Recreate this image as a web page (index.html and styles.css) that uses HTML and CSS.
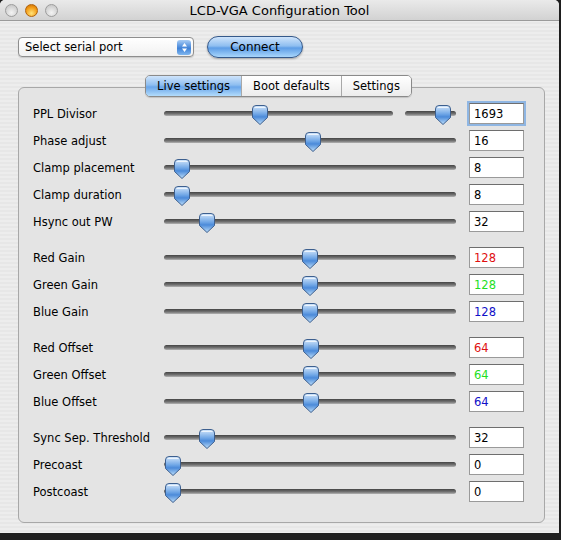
FILE: index.html
```html
<!DOCTYPE html>
<html lang="en">
<head>
    <meta charset="UTF-8">
    <title>LCD-VGA Configuration Tool</title>
    <link rel="stylesheet" href="styles.css">
</head>
<body>

<div class="window">
    <!-- Barra del titolo -->
    <div class="titlebar">
        <div class="lights">
            <span class="light"></span>
            <span class="light orange"></span>
            <span class="light"></span>
        </div>
        <div class="title">LCD-VGA Configuration Tool</div>
    </div>

    <!-- Porta seriale -->
    <div class="toolbar">
        <div class="select">
            <span>Select serial port</span>
            <span class="arrows">
                <svg width="7" height="11" viewBox="0 0 7 11"><path d="M3.5 1 L6 4.5 H1 Z M3.5 10 L6 6.5 H1 Z" fill="#fff"/></svg>
            </span>
        </div>
        <button class="connect">Connect</button>
    </div>

    <!-- Pannello con le schede -->
    <div class="panel">
        <div class="tabs">
            <div class="tab active">Live settings</div>
            <div class="tab">Boot defaults</div>
            <div class="tab">Settings</div>
        </div>

        <div class="group">
            <div class="row">
                <div class="label">PPL Divisor</div>
                <div class="sliders">
                    <div class="slider wide"><div class="track"></div><div class="thumb" style="left: 42%"><svg width="18" height="22" viewBox="0 0 18 22"><use href="#thumb"/></svg></div></div>
                    <div class="slider small"><div class="track"></div><div class="thumb" style="left: 75%"><svg width="18" height="22" viewBox="0 0 18 22"><use href="#thumb"/></svg></div></div>
                </div>
                <input class="value focus" value="1693">
            </div>
            <div class="row">
                <div class="label">Phase adjust</div>
                <div class="slider"><div class="track"></div><div class="thumb" style="left: 51%"><svg width="18" height="22" viewBox="0 0 18 22"><use href="#thumb"/></svg></div></div>
                <input class="value" value="16">
            </div>
            <div class="row">
                <div class="label">Clamp placement</div>
                <div class="slider"><div class="track"></div><div class="thumb" style="left: 6.2%"><svg width="18" height="22" viewBox="0 0 18 22"><use href="#thumb"/></svg></div></div>
                <input class="value" value="8">
            </div>
            <div class="row">
                <div class="label">Clamp duration</div>
                <div class="slider"><div class="track"></div><div class="thumb" style="left: 6.2%"><svg width="18" height="22" viewBox="0 0 18 22"><use href="#thumb"/></svg></div></div>
                <input class="value" value="8">
            </div>
            <div class="row">
                <div class="label">Hsync out PW</div>
                <div class="slider"><div class="track"></div><div class="thumb" style="left: 14.7%"><svg width="18" height="22" viewBox="0 0 18 22"><use href="#thumb"/></svg></div></div>
                <input class="value" value="32">
            </div>
        </div>

        <div class="group">
            <div class="row">
                <div class="label">Red Gain</div>
                <div class="slider"><div class="track"></div><div class="thumb" style="left: 50%"><svg width="18" height="22" viewBox="0 0 18 22"><use href="#thumb"/></svg></div></div>
                <input class="value red" value="128">
            </div>
            <div class="row">
                <div class="label">Green Gain</div>
                <div class="slider"><div class="track"></div><div class="thumb" style="left: 50%"><svg width="18" height="22" viewBox="0 0 18 22"><use href="#thumb"/></svg></div></div>
                <input class="value green" value="128">
            </div>
            <div class="row">
                <div class="label">Blue Gain</div>
                <div class="slider"><div class="track"></div><div class="thumb" style="left: 50%"><svg width="18" height="22" viewBox="0 0 18 22"><use href="#thumb"/></svg></div></div>
                <input class="value blue" value="128">
            </div>
        </div>

        <div class="group">
            <div class="row">
                <div class="label">Red Offset</div>
                <div class="slider"><div class="track"></div><div class="thumb" style="left: 50.3%"><svg width="18" height="22" viewBox="0 0 18 22"><use href="#thumb"/></svg></div></div>
                <input class="value red" value="64">
            </div>
            <div class="row">
                <div class="label">Green Offset</div>
                <div class="slider"><div class="track"></div><div class="thumb" style="left: 50.3%"><svg width="18" height="22" viewBox="0 0 18 22"><use href="#thumb"/></svg></div></div>
                <input class="value green" value="64">
            </div>
            <div class="row">
                <div class="label">Blue Offset</div>
                <div class="slider"><div class="track"></div><div class="thumb" style="left: 50.3%"><svg width="18" height="22" viewBox="0 0 18 22"><use href="#thumb"/></svg></div></div>
                <input class="value blue" value="64">
            </div>
        </div>

        <div class="group">
            <div class="row">
                <div class="label">Sync Sep. Threshold</div>
                <div class="slider"><div class="track"></div><div class="thumb" style="left: 14.7%"><svg width="18" height="22" viewBox="0 0 18 22"><use href="#thumb"/></svg></div></div>
                <input class="value" value="32">
            </div>
            <div class="row">
                <div class="label">Precoast</div>
                <div class="slider"><div class="track"></div><div class="thumb" style="left: 3.1%"><svg width="18" height="22" viewBox="0 0 18 22"><use href="#thumb"/></svg></div></div>
                <input class="value" value="0">
            </div>
            <div class="row">
                <div class="label">Postcoast</div>
                <div class="slider"><div class="track"></div><div class="thumb" style="left: 3.1%"><svg width="18" height="22" viewBox="0 0 18 22"><use href="#thumb"/></svg></div></div>
                <input class="value" value="0">
            </div>
        </div>
    </div>
</div>

<!-- Forma del cursore (aqua) -->
<svg class="defs" width="0" height="0">
    <defs>
        <linearGradient id="aqua" x1="0" y1="0" x2="0" y2="1">
            <stop offset="0" stop-color="#d6e8fb"/>
            <stop offset="0.45" stop-color="#6fa6e6"/>
            <stop offset="0.6" stop-color="#4b8ad9"/>
            <stop offset="1" stop-color="#bfe0fb"/>
        </linearGradient>
        <g id="thumb">
            <path d="M1.5 5 Q1.5 1.5 5 1.5 H13 Q16.5 1.5 16.5 5 V13.5 L9 20.5 L1.5 13.5 Z" fill="url(#aqua)" stroke="#3d5f8e" stroke-width="1"/>
            <path d="M3.5 3.5 H14.5" stroke="#fff" stroke-opacity="0.7" stroke-width="1"/>
        </g>
    </defs>
</svg>

</body>
</html>
```

FILE: styles.css
```css
    body {
        margin: 0;
        background-color: #1e1e1e;
        font-family: "DejaVu Sans", sans-serif;
        font-size: 11.5px;
        color: #000;
    }
    .window {
        width: 559px;
        height: 533px;
        border-radius: 5px 5px 0 0;
        background: repeating-linear-gradient(#ededed 0, #ededed 2px, #e7e7e7 2px, #e7e7e7 4px);
        overflow: hidden;
    }
    .titlebar {
        height: 20px;
        display: flex;
        align-items: center;
        position: relative;
        background: linear-gradient(#eaeaea, #d2d2d2);
        border-bottom: 1px solid #9a9a9a;
    }
    .lights {
        display: flex;
        gap: 7px;
        padding-left: 5px;
    }
    .light {
        width: 13px;
        height: 13px;
        border-radius: 50%;
        border: 1px solid #9c9c9c;
        box-sizing: border-box;
        background: radial-gradient(circle at 50% 70%, #f4f4f4, #c9c9c9 80%);
    }
    .light.orange {
        border-color: #b0620a;
        background: radial-gradient(circle at 50% 75%, #ffe37a, #f29a15 60%, #c46a08);
    }
    .title {
        position: absolute;
        left: 0;
        right: 0;
        text-align: center;
        font-size: 13px;
        pointer-events: none;
    }
    .toolbar {
        display: flex;
        align-items: center;
        gap: 13px;
        padding: 15px 0 0 18px;
        height: 22px;
    }
    .select {
        width: 176px;
        height: 20px;
        box-sizing: border-box;
        border: 1px solid #8e8e8e;
        border-radius: 4px;
        background: linear-gradient(#ffffff, #f1f1f1);
        display: flex;
        align-items: center;
        justify-content: space-between;
        padding-left: 6px;
        box-shadow: 0 1px 1px rgba(0, 0, 0, 0.15);
    }
    .arrows {
        width: 14px;
        height: 15px;
        margin-right: 2px;
        border-radius: 3px;
        background: linear-gradient(#a9cdf5, #3f82d8 55%, #7fb6ee);
        display: flex;
        align-items: center;
        justify-content: center;
    }
    .connect {
        width: 96px;
        height: 22px;
        border-radius: 11px;
        border: 1px solid #35598a;
        background: linear-gradient(#cfe4fb 0%, #8ebef0 45%, #5d9de6 55%, #a9d6fb 100%);
        font-family: "DejaVu Sans", sans-serif;
        font-size: 12px;
        color: #000;
        padding: 0;
        box-shadow: 0 1px 2px rgba(0, 0, 0, 0.3);
    }
    .panel {
        margin: 29px 0 0 18px;
        width: 527px;
        box-sizing: border-box;
        border: 1px solid #a8a8a8;
        border-radius: 6px;
        background-color: #e4e4e4;
        padding: 0 20px 17px 14px;
    }
    .tabs {
        display: flex;
        width: max-content;
        margin: -13px auto 3px;
        border: 1px solid #8a8a8a;
        border-radius: 5px;
        overflow: hidden;
        box-shadow: 0 1px 1px rgba(0, 0, 0, 0.15);
    }
    .tab {
        height: 20px;
        line-height: 20px;
        padding: 0 11px;
        background: linear-gradient(#ffffff, #ececec);
        border-left: 1px solid #a8a8a8;
    }
    .tab:first-child {
        border-left: none;
    }
    .tab.active {
        background: linear-gradient(#cfe4fb 0%, #8ebef0 45%, #6aa6ea 55%, #b3dcfb 100%);
    }
    .group {
        margin-bottom: 9px;
    }
    .group:last-child {
        margin-bottom: 0;
    }
    .row {
        display: flex;
        align-items: center;
        height: 27px;
    }
    .label {
        width: 131px;
        flex-shrink: 0;
    }
    .sliders {
        flex: 1;
        display: flex;
        gap: 12px;
    }
    .slider {
        flex: 1;
        position: relative;
        height: 22px;
        display: flex;
        align-items: center;
    }
    .slider.wide {
        flex: 229;
    }
    .slider.small {
        flex: 51;
    }
    .track {
        width: 100%;
        height: 5px;
        border-radius: 3px;
        background: linear-gradient(#444444, #767676 60%, #b4b4b4);
    }
    .thumb {
        position: absolute;
        top: 1px;
        width: 18px;
        height: 22px;
        transform: translateX(-50%);
    }
    .value {
        width: 55px;
        height: 21px;
        box-sizing: border-box;
        margin-left: 13px;
        border: 1px solid #9a9a9a;
        border-top-color: #6e6e6e;
        background-color: #fff;
        font-family: "DejaVu Sans", sans-serif;
        font-size: 11.5px;
        padding: 0 0 0 4px;
        outline: none;
    }
    .value.focus {
        box-shadow: 0 0 0 2px #8fb6e3;
    }
    .red {
        color: #e01010;
    }
    .green {
        color: #1ee01e;
    }
    .blue {
        color: #1010c8;
    }
    .defs {
        position: absolute;
    }
```
